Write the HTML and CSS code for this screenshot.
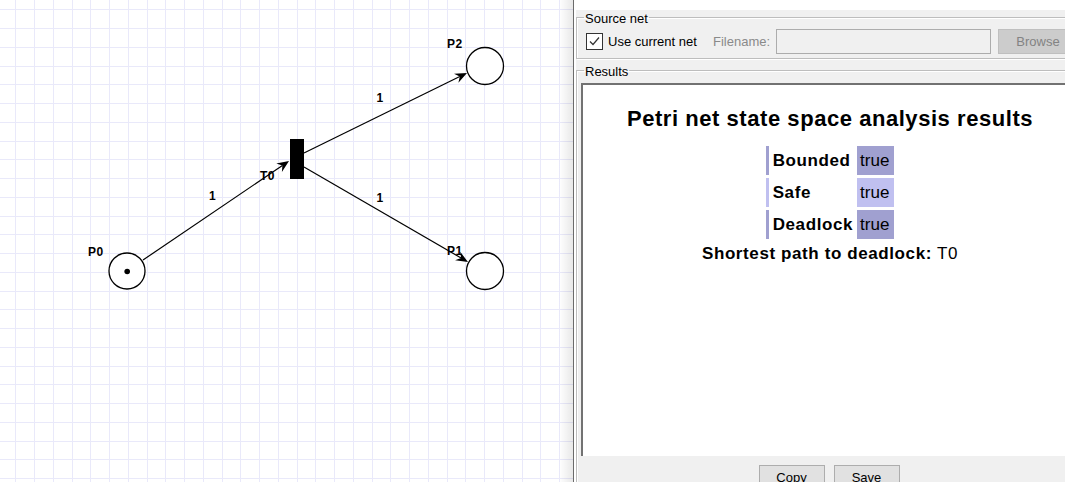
FILE: index.html
```html
<!DOCTYPE html>
<html>
<head>
<meta charset="utf-8">
<title>Petri net state space analysis</title>
<link rel="stylesheet" href="styles.css">
</head>
<body>
<div class="desk">
  <div class="canvas">
    <svg class="net" width="573" height="482" viewBox="0 0 573 482">
      <path class="grid" d="M15.5 0V482M34.5 0V482M53.5 0V482M72.5 0V482M90.5 0V482M109.5 0V482M128.5 0V482M147.5 0V482M165.5 0V482M184.5 0V482M203.5 0V482M222.5 0V482M240.5 0V482M259.5 0V482M278.5 0V482M297.5 0V482M315.5 0V482M334.5 0V482M353.5 0V482M372.5 0V482M390.5 0V482M409.5 0V482M428.5 0V482M447.5 0V482M465.5 0V482M484.5 0V482M503.5 0V482M522.5 0V482M540.5 0V482M559.5 0V482M0 9.5H573M0 28.5H573M0 47.5H573M0 66.5H573M0 84.5H573M0 103.5H573M0 122.5H573M0 141.5H573M0 159.5H573M0 178.5H573M0 197.5H573M0 216.5H573M0 234.5H573M0 253.5H573M0 272.5H573M0 291.5H573M0 309.5H573M0 328.5H573M0 347.5H573M0 366.5H573M0 384.5H573M0 403.5H573M0 422.5H573M0 441.5H573M0 459.5H573M0 478.5H573"/>
      <g class="labels">
        <text x="88" y="256">P0</text>
        <text x="447" y="48">P2</text>
        <text x="447" y="255">P1</text>
        <text x="260" y="180">T0</text>
        <text x="209" y="200">1</text>
        <text x="376.5" y="102">1</text>
        <text x="376.5" y="202">1</text>
      </g>
      <g class="arcs">
        <line x1="143" y1="260" x2="282.4" y2="165.5"/>
        <polygon points="289,161 281.9,171.9 282.4,165.5 276.3,163.6"/>
        <line x1="304" y1="153" x2="459.8" y2="76.5"/>
        <polygon points="467,73 458.4,82.8 459.8,76.5 454.0,73.8"/>
        <line x1="304" y1="167" x2="461.1" y2="258"/>
        <polygon points="468,262 455.1,260.3 461.1,258 460.1,251.7"/>
      </g>
      <g class="places">
        <circle cx="127" cy="271" r="18"/>
        <circle cx="485" cy="66" r="18.5"/>
        <circle cx="485" cy="271" r="18.5"/>
      </g>
      <circle class="token" cx="127.2" cy="271.5" r="2.8"/>
      <rect class="transition" x="290" y="139" width="14" height="40"/>
    </svg>
  </div>
  <div class="window">
    <div class="titlebar"></div>
    <div class="win-body">
      <fieldset class="group source">
        <legend>Source net</legend>
        <div class="src-row">
          <label class="check">
            <span class="box"><svg width="15" height="15" viewBox="0 0 15 15"><path d="M3 7.5L6 10.5L12 3.5"/></svg></span>
            <span>Use current net</span>
          </label>
          <span class="fname">Filename:</span>
          <span class="field"></span>
          <span class="btn disabled browse">Browse</span>
        </div>
      </fieldset>
      <fieldset class="group results">
        <legend>Results</legend>
        <div class="pane">
          <h1 class="res-title">Petri net state space analysis results</h1>
          <table class="res-table">
            <tr class="dark"><th class="k">Bounded</th><td class="v">true</td></tr>
            <tr class="light"><th class="k">Safe</th><td class="v">true</td></tr>
            <tr class="dark"><th class="k">Deadlock</th><td class="v">true</td></tr>
          </table>
          <p class="path"><b>Shortest path to deadlock:</b> T0</p>
        </div>
        <div class="actions">
          <span class="btn">Copy</span>
          <span class="btn">Save</span>
        </div>
      </fieldset>
    </div>
  </div>
</div>
</body>
</html>
```
FILE: styles.css
```css
html, body {
  margin: 0;
  padding: 0;
}
body {
  width: 1065px;
  height: 482px;
  overflow: hidden;
  background: #ffffff;
  font-family: "Liberation Sans", Arial, sans-serif;
}
.desk {
  display: flex;
  width: 1090px;
  height: 482px;
}

/* ---------- canvas ---------- */
.canvas {
  flex: none;
  width: 573px;
  height: 482px;
  position: relative;
  background: #ffffff;
}
.canvas::after {
  content: "";
  position: absolute;
  top: 0;
  right: 0;
  width: 14px;
  height: 100%;
  background: linear-gradient(to right, rgba(0,0,0,0), rgba(0,0,0,0.09));
}
.net {
  display: block;
}
.grid {
  stroke: #e9e9fa;
  stroke-width: 1;
  fill: none;
  shape-rendering: crispEdges;
}
.labels text {
  font-family: "Liberation Sans", Arial, sans-serif;
  font-weight: 700;
  font-size: 12px;
  letter-spacing: 0.5px;
  fill: #000;
}
.arcs line {
  stroke: #000;
  stroke-width: 1.2;
}
.arcs polygon {
  fill: #000;
}
.places circle {
  fill: #fff;
  stroke: #000;
  stroke-width: 1.3;
}
.token {
  fill: #000;
}
.transition {
  fill: #000;
}

/* ---------- window ---------- */
.window {
  flex: none;
  width: 513px;
  border-left: 1px solid #6b6b6b;
  background: #f0f0f0;
  display: flex;
  flex-direction: column;
  font-size: 13px;
  color: #000;
}
.titlebar {
  height: 10px;
  background: #ffffff;
  flex: none;
}
.win-body {
  flex: 1;
  border-left: 2px solid #ffffff;
  padding-right: 2px;
}
.group {
  margin: 0;
  padding: 0;
  min-width: 0;
  border: 1px solid #bdbdbd;
  box-shadow: inset 1px 1px 0 #ffffff, 1px 1px 0 #ffffff;
}
.group legend {
  margin-left: 7px;
  padding: 4px 1px 0;
  line-height: 14px;
  font-size: 13px;
  color: #000;
}
.source {
  margin-top: -2px;
}
.results {
  margin-top: 2px;
  border-bottom: none;
}

/* source row */
.src-row {
  display: flex;
  align-items: center;
  height: 25px;
  margin: 3px 0 4px 9px;
}
.check {
  flex: none;
  width: 127px;
  display: flex;
  align-items: center;
  gap: 5px;
}
.box {
  width: 15px;
  height: 15px;
  border: 1px solid #333333;
  background: #ffffff;
  display: block;
}
.box svg {
  display: block;
}
.box path {
  fill: none;
  stroke: #333333;
  stroke-width: 1.2;
}
.fname {
  flex: none;
  width: 63px;
  color: #8a8a8a;
}
.field {
  flex: none;
  width: 213px;
  height: 23px;
  border: 1px solid #acacac;
  background: #f0f0f0;
  margin-right: 7px;
}
.btn {
  flex: none;
  box-sizing: border-box;
  display: flex;
  align-items: center;
  justify-content: center;
  width: 66px;
  height: 25px;
  border: 1px solid #adadad;
  background: #e1e1e1;
  color: #000;
}
.btn.disabled {
  background: #cccccc;
  border-color: #bfbfbf;
  color: #838383;
}
.browse {
  width: 80px;
}

/* results pane */
.pane {
  margin: 4px 0 0 4px;
  width: 494px;
  height: 371px;
  border-top: 2px solid #727272;
  border-left: 2px solid #727272;
  background: #ffffff;
  text-align: center;
}
.res-title {
  margin: 21px 0 0;
  font-size: 22px;
  line-height: 26px;
  font-weight: 700;
  letter-spacing: 0.55px;
}
.res-table {
  margin: 11px auto 0;
  border-collapse: separate;
  border-spacing: 3px;
}
.res-table th,
.res-table td {
  height: 28px;
  padding: 0;
  font-size: 17px;
}
.k {
  text-align: left;
  font-weight: 700;
  letter-spacing: 0.6px;
  padding: 1px 1px 0 4px !important;
  background: #ffffff;
  border-left: 3px solid #a0a0d0;
}
.v {
  text-align: left;
  padding: 1px 5px 0 3px !important;
}
.dark .v { background: #a0a0d0; }
.light .v { background: #c0c0f0; }
.light .k { border-left-color: #c0c0f0; }
.path {
  margin: 2px 0 0;
  font-size: 17px;
  line-height: 20px;
  letter-spacing: 0.6px;
}
.actions {
  display: flex;
  justify-content: center;
  gap: 9px;
  margin-top: 9px;
  padding-right: 3px;
}
```
